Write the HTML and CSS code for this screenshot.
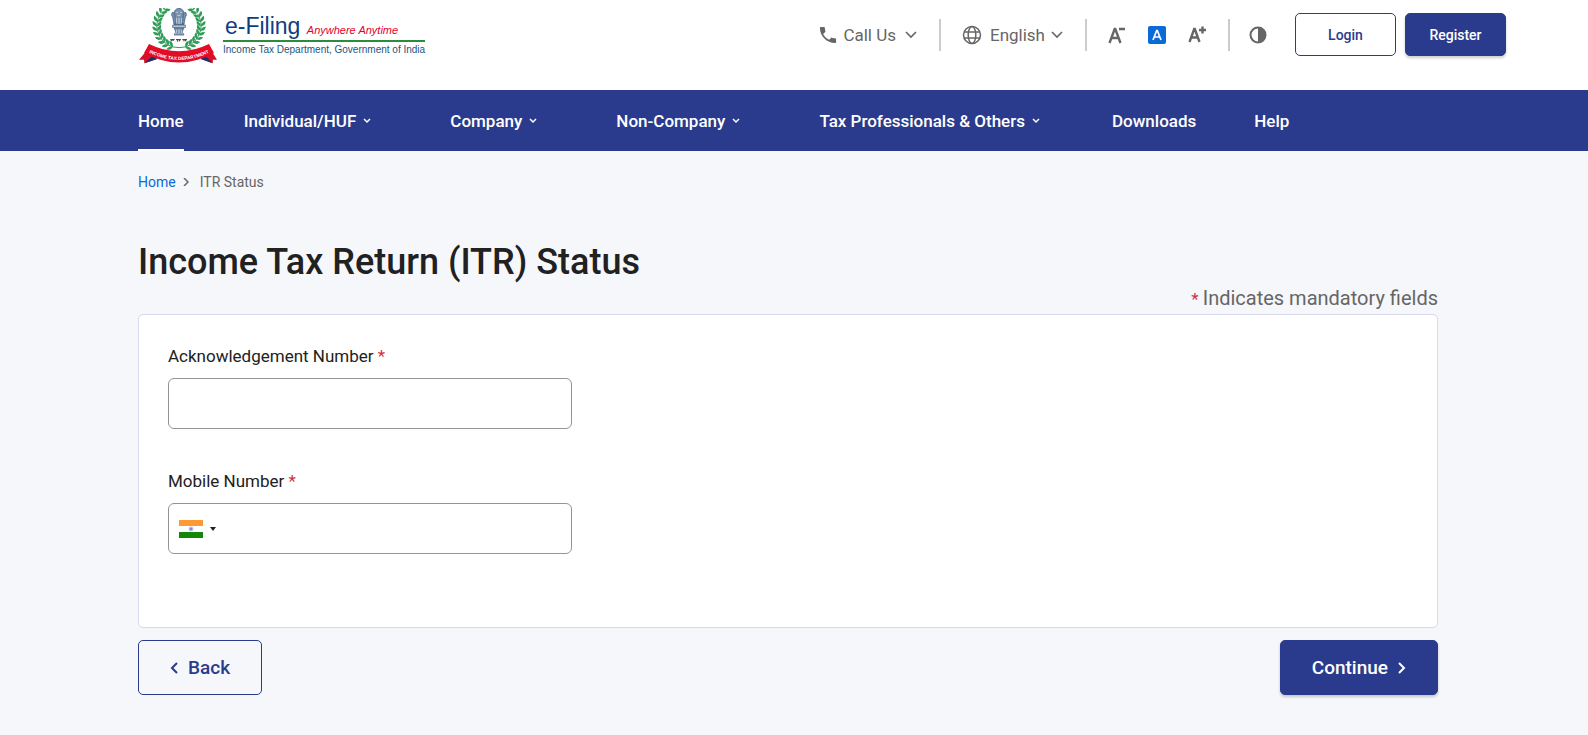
FILE: index.html
```html
<!DOCTYPE html>
<html lang="en">
<head>
  <meta charset="UTF-8">
  <meta name="viewport" content="width=device-width, initial-scale=1.0">
  <title>Income Tax Return (ITR) Status</title>
  <link rel="stylesheet" href="styles.css">
</head>
<body>
  <header class="topbar">
    <a href="#" class="logo">
      <svg class="emblem" viewBox="12 12 234 168" aria-hidden="true">
        <defs>
          <g id="leaf">
            <path d="M0 2C-11 0-14-6-13-14C-4-11 0-5 0 2Z" fill="#2f9c57"/>
            <path d="M0 2C11 0 14-6 13-14C4-11 0-5 0 2Z" fill="#2f9c57"/>
          </g>
          <g id="branch">
            <path d="M132 131A66 66 0 0 1 76 30" fill="none" stroke="#2f9c57" stroke-width="3"/>
            <use href="#leaf" transform="rotate(18 132 65) translate(132 131) rotate(-90)"/>
            <use href="#leaf" transform="rotate(30 132 65) translate(132 131) rotate(-90)"/>
            <use href="#leaf" transform="rotate(42 132 65) translate(132 131) rotate(-90)"/>
            <use href="#leaf" transform="rotate(54 132 65) translate(132 131) rotate(-90)"/>
            <use href="#leaf" transform="rotate(66 132 65) translate(132 131) rotate(-90)"/>
            <use href="#leaf" transform="rotate(78 132 65) translate(132 131) rotate(-90)"/>
            <use href="#leaf" transform="rotate(90 132 65) translate(132 131) rotate(-90)"/>
            <use href="#leaf" transform="rotate(102 132 65) translate(132 131) rotate(-90)"/>
            <use href="#leaf" transform="rotate(114 132 65) translate(132 131) rotate(-90)"/>
            <use href="#leaf" transform="rotate(126 132 65) translate(132 131) rotate(-90)"/>
            <use href="#leaf" transform="rotate(138 132 65) translate(132 131) rotate(-90)"/>
          </g>
          <path id="ribbon-line" d="M34 142Q132 194 230 142"/>
        </defs>
        <use href="#branch"/>
        <use href="#branch" transform="translate(264 0) scale(-1 1)"/>
        <!-- lion capital -->
        <g fill="#7d93ad" stroke="#34557d" stroke-width="2">
          <path d="M119 20Q132 6 145 20L149 32L144 48L147 62H117L120 48L115 32Z"/>
          <path d="M113 24Q106 32 113 40L117 60H122L119 30ZM151 24Q158 32 151 40L147 60H142L145 30Z"/>
          <path d="M113 63H151V71H113Z" fill="#b7c4d3"/>
          <path d="M118 72H146L142 84L147 93H117L122 84Z"/>
        </g>
        <g fill="none" stroke="#e8eef4" stroke-width="2">
          <path d="M124 25H129M135 25H140M127 33Q132 38 137 33M124 42V58M132 42V60M140 42V58M125 78L122 91M132 76V91M139 78L142 91"/>
        </g>
        <path d="M106 107H119M123 107H138M142 107H156M109 107V112M114 107V111M128 107V113M134 107V112M147 107V112M152 107V112" fill="none" stroke="#333" stroke-width="3"/>
        <!-- ribbon -->
        <path d="M36 139L12 167L27 167L28 178L65 166L58 149Z" fill="#d5122a"/>
        <path d="M228 139L246 167L234 167L233 178L199 166L206 149Z" fill="#d5122a"/>
        <path d="M28 178L58 151L66 165ZM233 178L206 151L198 165Z" fill="#17336b"/>
        <path d="M42 120Q132 164 222 120L237 147Q132 204 27 147Z" fill="#e30b25"/>
        <text class="ribbon-text"><textPath href="#ribbon-line" startOffset="50%" text-anchor="middle">INCOME TAX DEPARTMENT</textPath></text>
      </svg>
      <span class="logo-text">
        <span class="logo-title">e-Filing <em>Anywhere Anytime</em></span>
        <span class="logo-dept">Income Tax Department, Government of India</span>
      </span>
    </a>
    <div class="tools">
      <button type="button" class="tool call">
        <svg width="18" height="18" viewBox="2 2 20 20" aria-hidden="true"><path fill="#666" d="M6.6 10.8c1.4 2.8 3.8 5.1 6.6 6.6l2.2-2.2c.3-.3.7-.4 1-.2 1.1.4 2.3.6 3.6.6.6 0 1 .4 1 1V20c0 .6-.4 1-1 1C10.6 21 3 13.4 3 4c0-.6.4-1 1-1h3.5c.6 0 1 .4 1 1 0 1.300.2 2.500.6 3.600.1.300 0 .7-.2 1z"/></svg>
        Call Us
        <svg class="down" width="12" height="8" viewBox="0 0 12 8" aria-hidden="true"><path d="M1 1L6 6L11 1"/></svg>
      </button>
      <button type="button" class="tool language">
        <svg width="20" height="20" viewBox="0 0 20 20" fill="none" stroke="#666" stroke-width="1.5" aria-hidden="true"><circle cx="10" cy="10" r="8.500"/><ellipse cx="10" cy="10" rx="3.800" ry="8.500"/><path d="M2 7H18M2 13H18"/></svg>
        English
        <svg class="down" width="12" height="8" viewBox="0 0 12 8" aria-hidden="true"><path d="M1 1L6 6L11 1"/></svg>
      </button>
      <div class="tool sizes">
        <button type="button" aria-label="Decrease text size"><svg width="18" height="18" viewBox="0 0 18 18" fill="none" stroke="#666" stroke-width="2.4" aria-hidden="true"><path d="M1.500 17L6.700 3H7.300L12.500 17M3.500 12H10.500M11 3H17"/></svg></button>
        <button type="button" aria-label="Default text size"><svg width="18" height="18" viewBox="0 0 18 18" aria-hidden="true"><rect width="18" height="18" rx="2" fill="#0a6ad6"/><path d="M5 14L8.700 4.500H9.300L13 14M6.300 11H11.700" fill="none" stroke="#fff" stroke-width="1.7"/></svg></button>
        <button type="button" aria-label="Increase text size"><svg width="18" height="18" viewBox="0 0 18 18" fill="none" stroke="#666" stroke-width="2.4" aria-hidden="true"><path d="M1.500 16L6.200 3H6.800L11.500 16M3.500 11.500H9.500M11 4H18M14.500 .5V7.500"/></svg></button>
      </div>
      <button type="button" class="contrast" aria-label="Contrast"><svg width="18" height="18" viewBox="0 0 18 18" aria-hidden="true"><circle cx="9" cy="9" r="7.500" fill="#fff" stroke="#666" stroke-width="2"/><path d="M9 1A8 8 0 0 1 9 17Z" fill="#666"/></svg></button>
      <button type="button" class="btn btn-outline btn-small">Login</button>
      <button type="button" class="btn btn-solid btn-small register">Register</button>
    </div>
  </header>

  <nav class="menu">
    <a href="#" class="active">Home</a>
    <a href="#" class="has-sub">Individual/HUF <svg width="8" height="6" viewBox="0 0 8 6" aria-hidden="true"><path d="M1 1L4 4L7 1"/></svg></a>
    <a href="#" class="has-sub">Company <svg width="8" height="6" viewBox="0 0 8 6" aria-hidden="true"><path d="M1 1L4 4L7 1"/></svg></a>
    <a href="#" class="has-sub">Non-Company <svg width="8" height="6" viewBox="0 0 8 6" aria-hidden="true"><path d="M1 1L4 4L7 1"/></svg></a>
    <a href="#" class="has-sub last-sub">Tax Professionals &amp; Others <svg width="8" height="6" viewBox="0 0 8 6" aria-hidden="true"><path d="M1 1L4 4L7 1"/></svg></a>
    <a href="#">Downloads</a>
    <a href="#">Help</a>
  </nav>

  <main class="content">
    <div class="breadcrumb">
      <a href="#">Home</a>
      <svg width="6" height="8" viewBox="0 0 6 8" aria-hidden="true"><path d="M1 0L5 4L1 8"/></svg>
      <span>ITR Status</span>
    </div>
    <h1>Income Tax Return (ITR) Status</h1>
    <p class="mandatory"><span class="star">*</span>Indicates mandatory fields</p>

    <form>
      <div class="card">
        <div class="field">
          <label for="ackNumber">Acknowledgement Number <span class="star">*</span></label>
          <input type="text" id="ackNumber" class="box">
        </div>
        <div class="field">
          <label for="mobileNumber">Mobile Number <span class="star">*</span></label>
          <div class="box phone">
            <button type="button" class="country" aria-label="India">
              <svg width="24" height="18" viewBox="0 0 24 18" aria-hidden="true"><rect width="24" height="18" fill="#fff"/><rect width="24" height="6" fill="#ff9933"/><rect y="12" width="24" height="6" fill="#138808"/><circle cx="12" cy="9" r="2" fill="#8a8ad0" stroke="#c4c4e8"/></svg>
              <span class="caret"></span>
            </button>
            <input type="tel" id="mobileNumber">
          </div>
        </div>
      </div>
      <div class="actions">
        <button type="button" class="btn btn-outline btn-large"><svg width="8" height="12" viewBox="0 0 8 12" aria-hidden="true"><path d="M7 1L2 6L7 11"/></svg> Back</button>
        <button type="submit" class="btn btn-solid btn-large">Continue <svg width="8" height="12" viewBox="0 0 8 12" aria-hidden="true"><path d="M1 1L6 6L1 11"/></svg></button>
      </div>
    </form>
  </main>
</body>
</html>
```
FILE: styles.css
```css
* {
  box-sizing: border-box;
}

body {
  margin: 0;
  font-family: Roboto, Arial, sans-serif;
  background-color: #f5f7fb;
  color: #212121;
}

a {
  text-decoration: none;
}

button {
  font-family: inherit;
  padding: 0;
  border: none;
  background: none;
  cursor: pointer;
}

svg {
  display: block;
  flex: none;
}

/* Header */
.topbar {
  display: flex;
  justify-content: space-between;
  align-items: flex-start;
  height: 90px;
  padding: 8px 82px 0 139px;
  background-color: #fff;
}

.logo {
  display: flex;
  gap: 6px;
}

.emblem {
  width: 78px;
  height: 56px;
}

.ribbon-text {
  font: bold 14px "Liberation Sans", Arial, sans-serif;
  fill: #fff;
}

.logo-text {
  display: flex;
  flex-direction: column;
  padding-top: 4px;
  font-family: "Liberation Sans", Arial, sans-serif;
  white-space: nowrap;
}

.logo-title {
  padding: 0 2px;
  border-bottom: 2px solid #2a8c3c;
  font-size: 23px;
  line-height: 28px;
  color: #0d4080;
}

.logo-title em {
  font-size: 11px;
  line-height: 1;
  color: #e4002b;
}

.logo-dept {
  font-size: 10px;
  line-height: 16px;
  color: #1c5580;
}

.tools {
  display: flex;
  align-items: center;
  padding-top: 5px;
}

.tool {
  display: flex;
  align-items: center;
  height: 32px;
  margin-right: 21px;
  padding-right: 22px;
  border-right: 2px solid #ccc;
  font-size: 17px;
  color: #666;
}

.call,
.language {
  gap: 6px;
}

.call .down {
  margin-left: 3px;
}

.language svg:first-child {
  margin-right: 2px;
}

.down {
  fill: none;
  stroke: #666;
  stroke-width: 1.6;
}

.sizes {
  gap: 22px;
  margin-right: 19px;
}

.contrast {
  margin-right: 28px;
}

.btn {
  display: flex;
  align-items: center;
  justify-content: center;
  border: 1px solid #2a3b8d;
  border-radius: 5px;
  font-weight: 500;
}

.btn svg {
  fill: none;
  stroke: currentColor;
  stroke-width: 2;
}

.btn-outline {
  color: #2a3b8d;
}

.btn-solid {
  background-color: #2a3b8d;
  color: #fff;
  box-shadow: 0 2px 3px rgba(0, 0, 0, 0.2);
}

.btn-small {
  width: 101px;
  height: 43px;
  font-size: 14px;
}

.btn-large {
  gap: 10px;
  height: 55px;
  padding: 0 31px;
  font-size: 19px;
}

.register {
  margin-left: 9px;
}

/* Menu */
.menu {
  display: flex;
  height: 61px;
  padding-left: 138px;
  background-color: #2a3b8d;
}

.menu a {
  display: flex;
  align-items: center;
  gap: 7px;
  margin-right: 58px;
  color: #fff;
  font-size: 17px;
  font-weight: 500;
}

.menu .has-sub {
  margin-right: 79px;
}

.menu .last-sub {
  margin-right: 72px;
}

.menu .active {
  margin-right: 60px;
  box-shadow: inset 0 -2px #fff;
}

.menu svg {
  fill: none;
  stroke: #fff;
  stroke-width: 1.5;
}

/* Page */
.content {
  padding: 21px 150px 40px 138px;
}

.breadcrumb {
  display: flex;
  align-items: center;
  gap: 7px;
  font-size: 14px;
  line-height: 20px;
  color: #666;
}

.breadcrumb a {
  color: #0a6ad6;
}

.breadcrumb svg {
  margin-right: 4px;
  fill: none;
  stroke: #666;
  stroke-width: 1.5;
}

h1 {
  margin: 48px 0 0;
  font-size: 36px;
  font-weight: 500;
  line-height: 44px;
}

.mandatory {
  margin: 2px 0 3px;
  font-size: 20px;
  line-height: 24px;
  text-align: right;
  color: #666;
}

.star {
  color: #d32f3f;
}

.mandatory .star {
  margin-right: 4px;
  font-size: 17px;
}

.card {
  padding: 28px 29px 73px;
  border: 1px solid #d8d9ea;
  border-radius: 5px;
  background-color: #fff;
}

.field {
  max-width: 404px;
}

.field + .field {
  margin-top: 39px;
}

.field label {
  display: block;
  margin-bottom: 9px;
  font-size: 17px;
  line-height: 26px;
}

.box {
  display: flex;
  width: 100%;
  height: 51px;
  padding: 0 10px;
  border: 1px solid #949494;
  border-radius: 6px;
  background-color: #fff;
  font-family: inherit;
  font-size: 17px;
}

.country {
  display: flex;
  align-items: center;
  gap: 7px;
}

.caret {
  border: 3px solid transparent;
  border-top: 4px solid #212121;
  border-bottom: none;
}

.phone input {
  flex: 1;
  min-width: 0;
  padding: 0 10px;
  border: none;
  outline: none;
  background: none;
  font: inherit;
}

.actions {
  display: flex;
  justify-content: space-between;
  margin-top: 12px;
}
```
